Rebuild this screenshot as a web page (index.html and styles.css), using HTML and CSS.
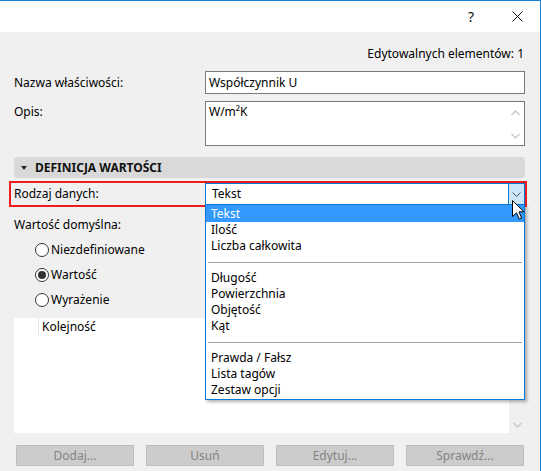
FILE: index.html
```html
<!DOCTYPE html>
<html lang="pl">
<head>
<meta charset="utf-8">
<link rel="stylesheet" href="styles.css">
</head>
<body>
<div class="window">
  <div class="titlebar">
    <span class="cap help">?</span>
    <span class="cap close"><svg width="11" height="11" viewBox="0 0 11 11"><path d="M0.5 0.5 L10.5 10.5 M10.5 0.5 L0.5 10.5" stroke="#111" stroke-width="1"/></svg></span>
  </div>
  <div class="content">
    <div class="count">Edytowalnych elementów: 1</div>
    <div class="row name">
      <span class="label">Nazwa właściwości:</span>
      <div class="input">Współczynnik U</div>
    </div>
    <div class="row desc">
      <span class="label">Opis:</span>
      <div class="textarea">
        <span class="ta-text">W/m²K</span>
        <div class="ta-scroll">
          <svg width="9" height="6" viewBox="0 0 9 6"><path d="M0.5 5 L4.5 1 L8.5 5" fill="none" stroke="#c2c2c2" stroke-width="1.2"/></svg>
          <svg width="9" height="6" viewBox="0 0 9 6"><path d="M0.5 1 L4.5 5 L8.5 1" fill="none" stroke="#c2c2c2" stroke-width="1.2"/></svg>
        </div>
      </div>
    </div>
    <div class="section"><span class="tri"></span>DEFINICJA WARTOŚCI</div>
    <div class="row type">
      <span class="label">Rodzaj danych:</span>
      <div class="combo">
        <span class="combo-text">Tekst</span>
        <span class="combo-btn"><svg width="9" height="5" viewBox="0 0 9 5"><path d="M0.5 0.5 L4.5 4.5 L8.5 0.5" fill="none" stroke="#555" stroke-width="1"/></svg></span>
      </div>
    </div>
    <div class="default-label">Wartość domyślna:</div>
    <div class="radios">
      <div class="radio"><span class="circle"></span>Niezdefiniowane</div>
      <div class="radio"><span class="circle on"></span>Wartość</div>
      <div class="radio"><span class="circle"></span>Wyrażenie</div>
    </div>
    <div class="list">
      <div class="list-body">
        <div class="list-head"><span class="col-first"></span><span class="col-name">Kolejność</span></div>
      </div>
      <div class="list-scroll">
        <svg width="9" height="6" viewBox="0 0 9 6"><path d="M0.5 1 L4.5 5 L8.5 1" fill="none" stroke="#c2c2c2" stroke-width="1.2"/></svg>
      </div>
    </div>
    <div class="buttons">
      <div class="btn">Dodaj...</div>
      <div class="btn">Usuń</div>
      <div class="btn">Edytuj...</div>
      <div class="btn">Sprawdź...</div>
    </div>
  </div>
  <div class="dropdown">
    <div class="item selected">Tekst</div>
    <div class="item">Ilość</div>
    <div class="item">Liczba całkowita</div>
    <div class="sep"></div>
    <div class="item">Długość</div>
    <div class="item">Powierzchnia</div>
    <div class="item">Objętość</div>
    <div class="item">Kąt</div>
    <div class="sep"></div>
    <div class="item">Prawda / Fałsz</div>
    <div class="item">Lista tagów</div>
    <div class="item">Zestaw opcji</div>
  </div>
  <svg class="cursor" width="13" height="20" viewBox="0 0 13 20"><path d="M0.5 0.5 L0.5 16.5 L4.5 12.8 L7.2 19 L9.6 18 L7 11.8 L12 11.8 Z" fill="#fff" stroke="#000" stroke-width="1" stroke-linejoin="miter"/></svg>
</div>
</body>
</html>
```
FILE: styles.css
```css
html, body {
  margin: 0;
  padding: 0;
}
body {
  width: 541px;
  height: 471px;
  overflow: hidden;
  background: #f0f0f0;
  font-family: "Noto Sans", "Open Sans", sans-serif;
  font-size: 12px;
  color: #000;
}
.window {
  position: relative;
  height: 471px;
  box-sizing: border-box;
  border-top: 1px solid #1883d7;
  border-right: 1px solid #1883d7;
  background: #f0f0f0;
}
.titlebar {
  height: 31px;
  background: #fff;
  display: flex;
  justify-content: flex-end;
}
.cap {
  width: 46px;
  display: flex;
  align-items: center;
  justify-content: center;
}
.help {
  font-size: 14px;
  color: #111;
}
.content {
  padding: 0 15px 0 14px;
}
.count {
  text-align: right;
  line-height: 16px;
  margin-top: 14px;
  padding-right: 1px;
}
.row {
  display: grid;
  grid-template-columns: 191px 320px;
}
.name {
  margin-top: 9px;
}
.name .label {
  line-height: 23px;
}
.input {
  height: 23px;
  box-sizing: border-box;
  border: 1px solid #7a7a7a;
  background: #fff;
  padding-left: 3px;
  line-height: 21px;
}
.desc {
  margin-top: 7px;
}
.desc .label {
  padding-top: 3px;
  line-height: 16px;
}
.textarea {
  height: 45px;
  box-sizing: border-box;
  border: 1px solid #7a7a7a;
  background: #fff;
  display: flex;
  justify-content: space-between;
}
.ta-text {
  padding: 2px 0 0 3px;
  line-height: 16px;
}
.ta-scroll {
  width: 17px;
  display: flex;
  flex-direction: column;
  justify-content: space-between;
  align-items: center;
  padding: 8px 0 6px;
}
.section {
  margin-top: 11px;
  height: 21px;
  background: #d9d9d9;
  border-radius: 3px;
  font-weight: bold;
  line-height: 21px;
  display: flex;
  align-items: center;
  color: #111;
}
.tri {
  width: 0;
  height: 0;
  border-left: 3.5px solid transparent;
  border-right: 3.5px solid transparent;
  border-top: 4px solid #222;
  margin: 0 8px 0 7px;
}
.type {
  margin: 3px -2px 0 -5px;
  border: 2px solid #ee1c1c;
  grid-template-columns: 194px 320px;
}
.type .label {
  padding-left: 3px;
  line-height: 22px;
}
.combo {
  height: 22px;
  box-sizing: border-box;
  border: 1px solid #0078d7;
  background: #fff;
  display: flex;
  justify-content: space-between;
}
.combo-text {
  padding-left: 6px;
  line-height: 20px;
}
.combo-btn {
  width: 15px;
  background: #cce4f7;
  border-left: 1px solid #0078d7;
  display: flex;
  align-items: center;
  justify-content: center;
}
.default-label {
  margin-top: 10px;
  line-height: 16px;
}
.radios {
  margin-top: 4px;
}
.radio {
  height: 25px;
  display: flex;
  align-items: center;
  padding-left: 21px;
}
.circle {
  width: 14px;
  height: 14px;
  box-sizing: border-box;
  border: 1px solid #333;
  border-radius: 50%;
  background: #fff;
  margin-right: 2px;
  display: flex;
  align-items: center;
  justify-content: center;
}
.circle.on::after {
  content: "";
  width: 8px;
  height: 8px;
  border-radius: 50%;
  background: #333;
}
.list {
  margin-top: 6px;
  height: 115px;
  display: flex;
}
.list-body {
  flex: 1;
  background: #fff;
}
.list-head {
  height: 17px;
  display: flex;
}
.col-first {
  width: 24px;
  border-right: 1px solid #e5e5e5;
}
.col-name {
  padding-left: 3px;
  line-height: 17px;
}
.list-scroll {
  width: 16px;
  display: flex;
  align-items: flex-end;
  justify-content: center;
  padding-bottom: 5px;
  box-sizing: border-box;
}
.buttons {
  margin-top: 12px;
  padding: 0 1px 0 2px;
  display: grid;
  grid-template-columns: repeat(4, 1fr);
  gap: 12px;
}
.btn {
  height: 21px;
  box-sizing: border-box;
  background: #cccccc;
  border: 1px solid #bfbfbf;
  color: #838383;
  text-align: center;
  line-height: 19px;
}
.dropdown {
  position: absolute;
  left: 205px;
  top: 203px;
  width: 320px;
  box-sizing: border-box;
  border: 1px solid #0078d7;
  background: #fff;
  padding-bottom: 1px;
  box-shadow: 2px 2px 3px rgba(0, 0, 0, 0.3);
}
.item {
  height: 16px;
  line-height: 16px;
  padding-left: 5px;
  color: #000;
}
.item.selected {
  height: 17px;
  line-height: 17px;
  background: #3399ff;
  color: #fff;
}
.sep {
  height: 16px;
  display: flex;
  align-items: center;
  padding: 0 2px;
}
.sep::after {
  content: "";
  flex: 1;
  height: 1px;
  background: #a0a0a0;
}
.cursor {
  position: absolute;
  left: 512px;
  top: 199px;
}
```
